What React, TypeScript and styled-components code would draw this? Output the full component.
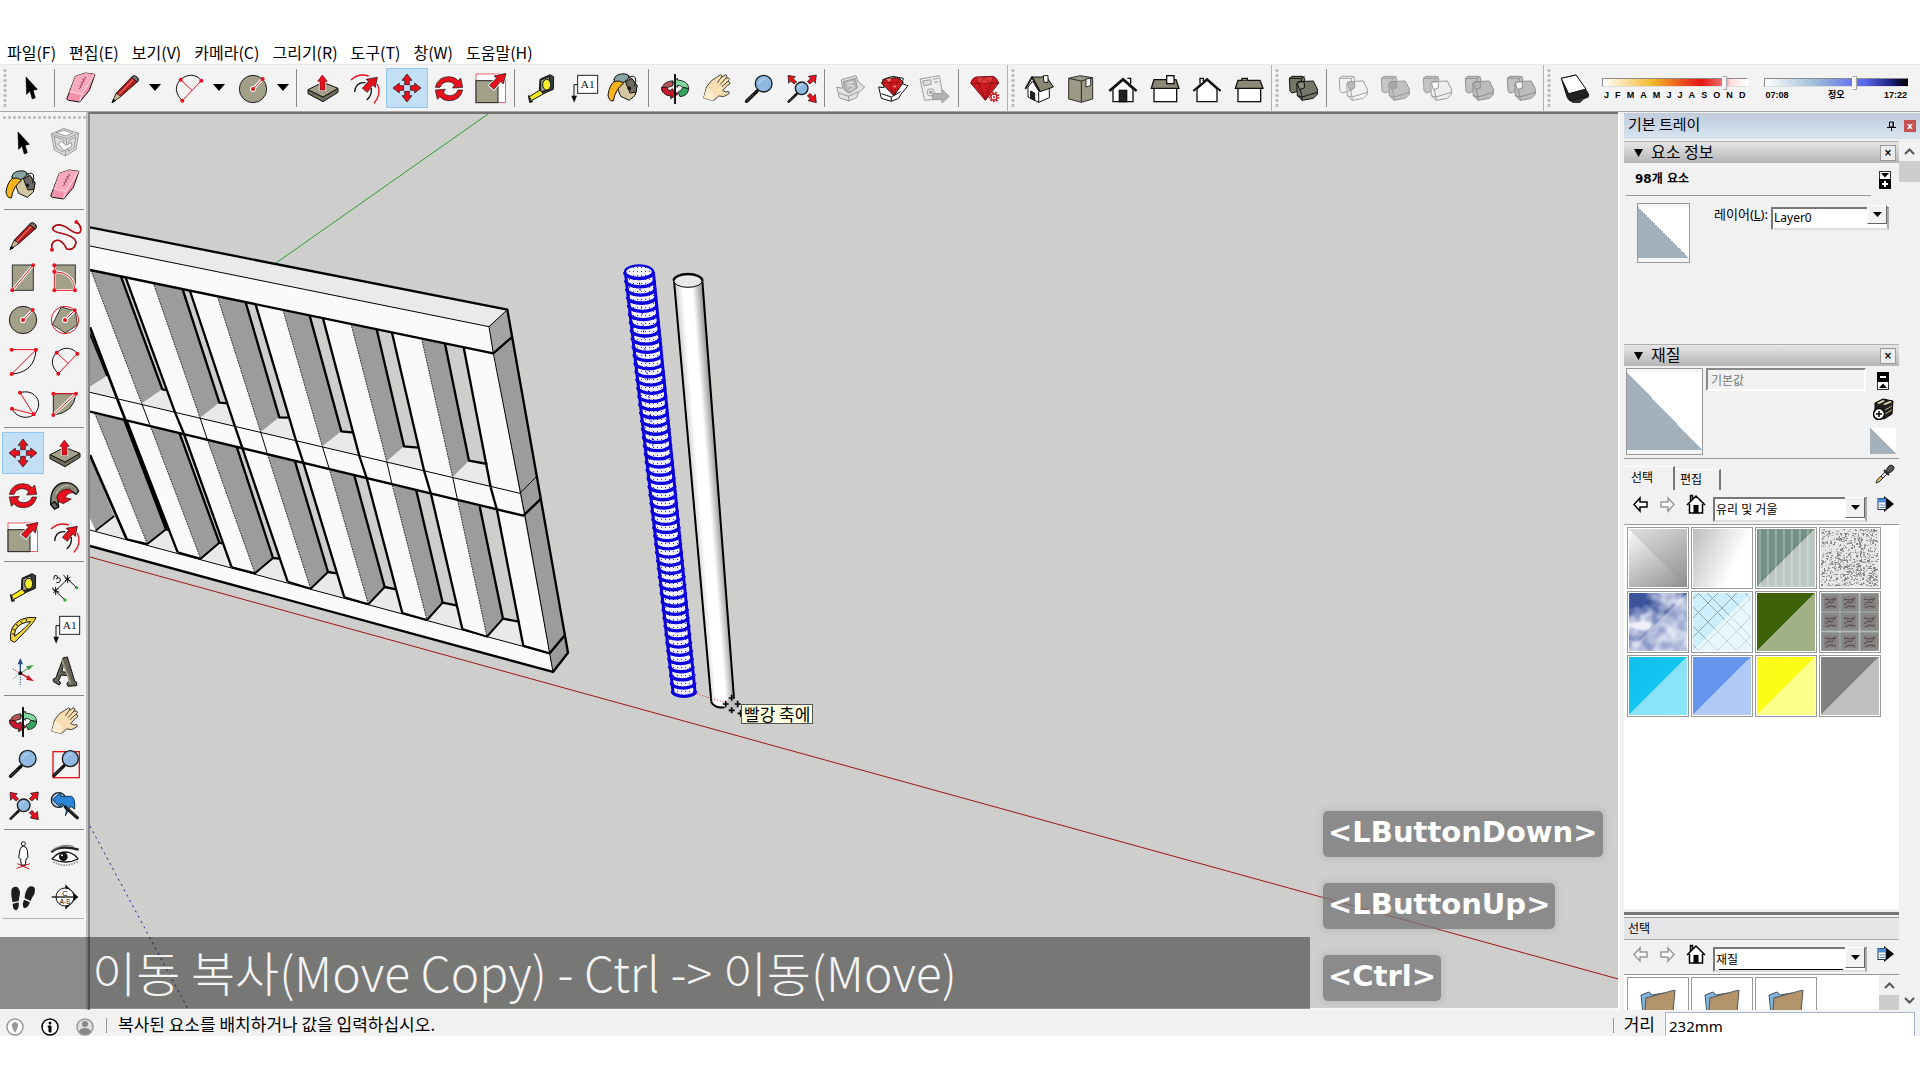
import React from 'react';
import styled, { createGlobalStyle, css } from 'styled-components';

const ui = '"Noto Sans", "Noto Sans CJK KR", sans-serif';
const kr = '"Noto Sans CJK KR", sans-serif';

const Global = createGlobalStyle`
  * { box-sizing: border-box; }
  body { margin: 0; background: #fff; font-family: ${kr}; color: #000; }
  button, input, select { font: inherit; color: inherit; margin: 0; }
`;

/* ---------- drawing helpers ---------- */
const RED = '#e8101c';
const STONE = '#a3a08a';
const INK = '#111';

const Dots = ({ at }: { at: number[][] }) => (
  <g fill={RED}>{at.map(([x, y]) => <circle key={`${x}-${y}`} cx={x} cy={y} r="6" />)}</g>
);

const RedArrow = ({ d }: { d: string }) => <path d={d} fill={RED} stroke={INK} strokeWidth="2" strokeLinejoin="round" />;

const Lens = ({ cx, cy, r }: { cx: number; cy: number; r: number }) => (
  <>
    <line x1={cx - r * 0.8} y1={cy + r * 0.9} x2={cx - r * 2.05} y2={cy + r * 2.1} stroke="#111" strokeWidth={r * 0.42} strokeLinecap="round" />
    <line x1={cx - r * 1.2} y1={cy + r * 1.25} x2={cx - r * 2} y2={cy + r * 2.05} stroke="#555" strokeWidth={r * 0.12} />
    <circle cx={cx} cy={cy} r={r} fill="#8fb9e0" stroke="#1c1c1c" strokeWidth="4" />
    <path d={`M${cx - r * 0.6} ${cy} Q${cx - r * 0.4} ${cy - r * 0.6} ${cx + r * 0.2} ${cy - r * 0.6}`} stroke="#c4dcf2" strokeWidth="3" fill="none" />
  </>
);

const Blocks = ({ a, b, line, over }: { a: string; b: string; line: string; over: string }) => (
  <g stroke={line} strokeWidth="3" strokeLinejoin="round">
    <path d="M22 34 L30 28 L62 28 L68 34 L68 62 L58 70 L30 78 L24 72Z" fill={a} />
    <path d="M22 34 L58 34 L68 28 M58 34 L58 70" fill="none" />
    <path d="M44 50 L50 44 L94 42 L106 66 L106 82 L94 94 L60 100 L46 86Z" fill={b} />
    <path d="M46 86 L60 90 L106 76 M60 90 L60 100 M50 44 L60 90" fill="none" />
    <path d="M46 46 L66 44 L68 62 L52 68Z" fill={over} />
  </g>
);

type Art = { o: [number, number]; art: React.ReactNode };
const icons: Record<string, Art> = {
  select: { o: [6, 36], art: <path d="M54 66 L56 118 L66 108 L73 132 L82 128 L75 106 L88 103Z" fill="#000" stroke="#000" strokeWidth="2" /> },
  component: {
    o: [132, 36],
    art: (
      <g fill="none" stroke="#9b9b9b" strokeWidth="3" strokeLinejoin="round">
        <path d="M154 72 L190 55 L236 70 L228 118 L196 138 L163 120Z" fill="#dcdcdc" />
        <path d="M154 72 L200 86 L236 70 M200 86 L196 138 M162 79 L192 90 L189 126 L169 114Z M207 91 L228 80 L222 114 L204 124Z" />
        <path d="M168 68 L192 61 L218 70 L198 78Z" fill="#fff" />
        <path d="M174 102 L184 94 L198 106 L214 98 L216 108 L192 122Z" fill="#fff" />
      </g>
    ),
  },
  paint: {
    o: [6, 162],
    art: (
      <g stroke={INK} strokeWidth="3" strokeLinejoin="round">
        <path d="M36 198 L78 186 L105 218 L100 246 L82 262 L56 250Z" fill="#d3c6a2" />
        <path d="M70 206 L90 196 L105 218 L102 238 L84 240Z" fill="#6d6a64" />
        <path d="M36 206 Q34 188 56 183 Q82 180 80 194 Q66 218 36 206Z" fill="#8aa4a6" />
        <path d="M36 206 Q54 200 64 212 Q40 228 34 264 Q20 264 18 246 Q22 218 36 206Z" fill="#f9b31c" />
        <path d="M80 196 Q90 184 100 194 Q104 206 97 220" fill="none" />
        <circle cx="82" cy="226" r="4" fill="#111" />
      </g>
    ),
  },
  eraser: {
    o: [132, 162],
    art: (
      <g stroke={INK} strokeWidth="3" strokeLinejoin="round">
        <path d="M152 258 L178 190 L208 180 L237 184 L220 232 L191 267 L158 262Z" fill="#f690ab" />
        <path d="M178 190 L208 180 L237 184 L199 242 L162 234Z" fill="#f8a9bd" stroke="none" />
        <path d="M160 236 L198 244 L191 265 M198 244 L234 188" fill="none" stroke="#fde4ea" />
        <path d="M188 228 l8 -6 l-5 -4 l10 -4 l-6 -5 l10 -4 l-5 -5 l9 -3 l-3 -6" fill="none" stroke="#9c4a5f" strokeWidth="3" />
      </g>
    ),
  },
  pencil: {
    o: [6, 309],
    art: (
      <g stroke={INK} strokeWidth="2.500" strokeLinejoin="round">
        <path d="M42 388 L90 338 Q98 332 106 340 Q112 348 108 352 L56 398Z" fill="#b11b1e" />
        <path d="M50 392 L96 344" stroke="#e46a62" strokeWidth="4" />
        <path d="M30 416 L42 388 L50 392 L56 398Z" fill="#cdb795" />
        <path d="M30 416 L34 406 L41 410Z" fill="#111" />
        <path d="M88 340 Q98 330 107 341 Q112 348 106 354Z" fill="#77706c" />
      </g>
    ),
  },
  freehand: {
    o: [132, 309],
    art: (
      <>
        <path d="M230 333 Q248 348 240 364 Q230 372 204 352 Q176 334 160 348 Q152 360 180 366 Q228 376 228 396 Q222 420 200 414 Q184 380 164 390 Q152 396 156 416" fill="none" stroke="#8c0c14" strokeWidth="5" />
        <path d="M230 333 Q248 348 240 364 Q230 372 204 352 Q176 334 160 348 Q152 360 180 366 Q228 376 228 396 Q222 420 200 414 Q184 380 164 390 Q152 396 156 416" fill="none" stroke={RED} strokeWidth="2" />
        <Dots at={[[229, 333], [156, 416]]} />
      </>
    ),
  },
  rect: {
    o: [6, 435],
    art: (
      <>
        <rect x="37" y="462" width="63" height="76" fill={STONE} stroke="#333" strokeWidth="3" />
        <path d="M37 538 L99 463" stroke="#fff" strokeWidth="9" /><path d="M37 538 L99 463" stroke={RED} strokeWidth="3" />
        <Dots at={[[37, 538], [99, 463]]} />
      </>
    ),
  },
  rotrect: {
    o: [132, 435],
    art: (
      <>
        <rect x="163" y="462" width="63" height="76" fill={STONE} stroke="#333" strokeWidth="3" />
        <path d="M163 482 Q222 484 225 538 L163 538 L163 463" fill="none" stroke="#fff" strokeWidth="8" />
        <path d="M163 482 Q222 484 225 538 L163 538 L163 463" fill="none" stroke={RED} strokeWidth="3" />
        <Dots at={[[163, 463], [163, 482], [163, 538], [225, 538]]} />
      </>
    ),
  },
  circle: {
    o: [6, 561],
    art: (
      <>
        <circle cx="69" cy="627" r="41" fill={STONE} stroke="#222" strokeWidth="3" />
        <circle cx="69" cy="627" r="9" fill="#fff" />
        <path d="M69 627 L98 597" stroke="#fff" strokeWidth="9" /><path d="M69 627 L98 597" stroke={RED} strokeWidth="3" />
        <Dots at={[[69, 627], [98, 597]]} />
      </>
    ),
  },
  polygon: {
    o: [132, 561],
    art: (
      <>
        <circle cx="195" cy="627" r="41" fill="#fff" stroke={RED} strokeWidth="3" />
        <path d="M184 588 L226 600 L232 642 L196 666 L157 640Z" fill={STONE} stroke="#333" strokeWidth="3" />
        <path d="M195 627 L224 598" stroke="#fff" strokeWidth="9" /><path d="M195 627 L224 598" stroke={RED} strokeWidth="3" />
        <circle cx="195" cy="627" r="9" fill="#fff" />
        <Dots at={[[195, 627], [224, 598]]} />
      </>
    ),
  },
  arc: {
    o: [6, 687],
    art: (
      <>
        <path d="M108 716 Q104 784 35 789" fill="none" stroke="#111" strokeWidth="3" />
        <path d="M35 716 L108 716 L35 789" fill="none" stroke={RED} strokeWidth="3" />
        <Dots at={[[35, 716], [108, 716], [35, 789]]} />
      </>
    ),
  },
  arc2: {
    o: [132, 687],
    art: (
      <>
        <path d="M175 788 C152 766 152 742 170 725 C190 706 218 708 232 728" fill="none" stroke="#111" strokeWidth="3" />
        <path d="M232 728 L175 788 M170 725 L204 757" fill="none" stroke={RED} strokeWidth="3" />
        <Dots at={[[170, 725], [232, 728], [175, 788]]} />
      </>
    ),
  },
  arc3: {
    o: [6, 813],
    art: (
      <>
        <path d="M60 845 C96 834 118 860 116 882 C112 926 56 932 36 893" fill="none" stroke="#111" strokeWidth="3" />
        <path d="M60 845 L101 910 L36 893" fill="none" stroke={RED} strokeWidth="3" />
        <Dots at={[[60, 845], [101, 910], [36, 893]]} />
      </>
    ),
  },
  pie: {
    o: [132, 813],
    art: (
      <>
        <path d="M160 848 L228 848 Q222 906 160 912Z" fill={STONE} stroke="#222" strokeWidth="3" />
        <path d="M160 912 L228 848" stroke="#fff" strokeWidth="9" />
        <path d="M160 848 L228 848 L160 912" fill="none" stroke={RED} strokeWidth="3" />
        <Dots at={[[160, 848], [228, 848], [160, 912]]} />
      </>
    ),
  },
  move: {
    o: [8, 968],
    art: (
      <>
        {[0, 90, 180, 270].map((a) => (
          <g key={a} transform={`rotate(${a} 71 1031)`}>
            <RedArrow d="M71 989 L86 1008 L78 1008 L78 1021 L64 1021 L64 1008 L56 1008Z" />
          </g>
        ))}
      </>
    ),
  },
  pushpull: {
    o: [132, 966],
    art: (
      <g stroke="#111" strokeWidth="3" strokeLinejoin="round">
        <path d="M150 1034 L150 1046 L195 1070 L240 1042 L240 1030 L195 1056Z" fill="#6f6e5c" />
        <path d="M150 1034 L195 1012 L240 1030 L195 1056Z" fill="#a3a18c" />
        <path d="M193 988 L210 1010 L202 1010 L202 1035 L185 1035 L185 1010 L177 1010Z" fill={RED} stroke="#fff" strokeWidth="5" />
        <path d="M193 990 L208 1009 L201 1009 L201 1035 L186 1035 L186 1009 L179 1009Z" fill={RED} stroke="#7c0910" strokeWidth="2" />
      </g>
    ),
  },
  rotate: {
    o: [6, 1089],
    art: (
      <>
        <RedArrow d="M28 1150 Q36 1118 68 1118 Q88 1118 96 1130 L104 1122 L110 1150 L80 1152 L86 1142 Q78 1132 66 1133 Q48 1134 42 1150Z" />
        <g transform="rotate(180 69 1154)">
          <RedArrow d="M28 1150 Q36 1118 68 1118 Q88 1118 96 1130 L104 1122 L110 1150 L80 1152 L86 1142 Q78 1132 66 1133 Q48 1134 42 1150Z" />
        </g>
      </>
    ),
  },
  follow: {
    o: [132, 1089],
    art: (
      <g stroke="#111" strokeWidth="4" strokeLinejoin="round">
        <path d="M152 1180 Q150 1128 186 1116 Q222 1110 236 1140 L228 1150 Q206 1132 184 1150 Q170 1166 176 1188 L164 1194Z" fill="#8b8a7a" />
        <path d="M168 1150 Q178 1124 206 1122" fill="none" stroke="#c2c0ad" strokeWidth="3" />
        <path d="M170 1160 Q176 1134 208 1134 L222 1144 Q200 1146 196 1160 L214 1164 L190 1178 L176 1172Z" fill={RED} strokeWidth="2" />
        <path d="M152 1180 L164 1172 L176 1188 L164 1194Z" fill="#6a6a5c" />
      </g>
    ),
  },
  scale: {
    o: [10, 47],
    art: (
      <>
        <rect x="28" y="68" width="88" height="86" fill="#fff" stroke={RED} strokeWidth="2" />
        <rect x="28" y="88" width="66" height="66" fill={STONE} stroke="#222" strokeWidth="3" />
        <path d="M118 66 L110 98 L102 90 L82 114 L68 102 L90 80 L82 74Z" fill={RED} stroke="#fff" strokeWidth="7" />
        <RedArrow d="M118 66 L110 98 L102 90 L82 114 L68 102 L90 80 L82 74Z" />
      </>
    ),
  },
  offset: {
    o: [132, 45],
    art: (
      <>
        <path d="M153 84 Q176 62 206 72 M232 96 Q246 126 222 154" fill="none" stroke={RED} strokeWidth="4" />
        <path d="M164 120 Q166 90 196 92 M214 108 Q216 132 200 144" fill="none" stroke="#111" strokeWidth="4" />
        <RedArrow d="M232 76 L226 106 L218 99 L202 121 L187 109 L206 88 L198 82Z" />
      </>
    ),
  },
  tape: {
    o: [6, 195],
    art: (
      <g stroke="#111" strokeWidth="3" strokeLinejoin="round">
        <path d="M66 232 L96 218 L107 224 L106 262 L74 276 L64 268Z" fill="#3b3b38" />
        <path d="M68 234 L94 224 L94 262 L68 270Z" fill="#a09e92" />
        <ellipse cx="86" cy="248" rx="12" ry="16" fill="#f7ee2d" />
        <path d="M66 264 L76 276 L40 296 L34 284Z" fill="#f6e91f" />
        <path d="M32 280 L36 300 L44 298" fill="none" strokeWidth="5" />
      </g>
    ),
  },
  dim: {
    o: [132, 195],
    art: (
      <>
        <path d="M166 270 L203 234 M156 260 L194 296 M190 222 L230 260" stroke="#111" strokeWidth="3" />
        <path d="M160 276 L174 262 M158 266 L178 274 M167 258 L167 282 M195 240 L211 228 M194 230 L212 240 M203 222 L203 246" stroke="#111" strokeWidth="3" />
        <path d="M164 230 q10 -12 14 -2 q-2 8 -8 6 q14 0 8 10 q-8 6 -14 -2" transform="rotate(-40 170 236)" fill="none" stroke="#111" strokeWidth="3" />
        <circle cx="230" cy="260" r="5" fill="#3aa644" /><circle cx="195" cy="297" r="5" fill="#3aa644" />
      </>
    ),
  },
  protractor: {
    o: [6, 321],
    art: (
      <g stroke="#111" strokeWidth="3" strokeLinejoin="round">
        <path d="M32 418 Q26 376 62 356 Q84 346 108 350 L104 358 Q96 372 44 424Z" fill="#f0d43a" />
        <path d="M44 406 Q42 380 66 368 Q80 362 92 362 Q80 378 44 406Z" fill="#f4f4f4" />
        <path d="M36 398 l8 2 M38 384 l8 4 M48 370 l6 5 M62 360 l4 6 M78 354 l2 7" />
      </g>
    ),
  },
  text: {
    o: [132, 321],
    art: (
      <>
        <rect x="179" y="346" width="60" height="54" fill="#fff" stroke="#222" strokeWidth="3" />
        <text x="209" y="383" fontFamily='"Liberation Serif", serif' fontSize="34" textAnchor="middle" fill="#111">A1</text>
        <path d="M179 374 L168 374 L168 412" fill="none" stroke="#111" strokeWidth="3" />
        <path d="M160 407 L177 407 L168.500 428Z" fill="#111" />
      </>
    ),
  },
  axes: {
    o: [6, 447],
    art: (
      <>
        <path d="M61 517 L61 486" stroke="#244a86" strokeWidth="4" /><path d="M53 490 L61 471 L69 490Z" fill="#244a86" />
        <path d="M61 517 L84 502" stroke="#3f9a45" strokeWidth="3" /><path d="M78 496 L101 492 L86 508Z" fill="#3f9a45" />
        <path d="M61 517 L84 530" stroke="#c11a22" strokeWidth="4" /><path d="M84 522 L102 541 L78 536Z" fill="#c11a22" />
        <path d="M61 526 L61 552" stroke="#244a86" strokeWidth="3" strokeDasharray="4 4" />
        <path d="M56 514 L36 502" stroke="#c11a22" strokeWidth="3" strokeDasharray="4 4" />
        <path d="M56 521 L38 534" stroke="#3f9a45" strokeWidth="3" strokeDasharray="4 4" />
        <circle cx="61" cy="517" r="6" fill="#111" />
      </>
    ),
  },
  text3d: {
    o: [132, 447],
    art: (
      <g stroke="#111" strokeWidth="3" strokeLinejoin="round">
        <path d="M190 470 L202 468 L224 540 L230 544 L230 554 L204 556 L200 548 L208 540 L204 524 L184 522 L176 538 L182 546 L178 552 L160 542 L160 534 L168 530Z" fill="#66645a" />
        <path d="M190 490 L200 514 L186 512Z" fill="#f2f2f2" />
        <path d="M186 476 L212 548" stroke="#a3a08a" strokeWidth="5" />
      </g>
    ),
  },
  orbit: {
    o: [6, 597],
    art: (
      <g stroke="#111" strokeWidth="2.500" strokeLinejoin="round">
        <path d="M30 668 Q28 642 62 638 L62 654 Q46 656 46 662 L48 670Z" fill="#b95552" />
        <path d="M76 630 L76 636 Q110 638 110 662 L92 658 Q88 652 76 652 L76 658 L62 646Z" fill="#7fd6a0" />
        <path d="M110 662 Q108 684 84 686 L78 672 Q92 668 92 658Z" fill="#38a361" />
        <path d="M28 658 Q30 682 56 684 L56 692 L78 678 L60 662 L58 668 Q46 668 44 658Z" fill="#c4162c" />
        <path d="M69 620 L69 706" stroke="#111" strokeWidth="6" strokeLinecap="round" />
      </g>
    ),
  },
  hand: {
    o: [132, 597],
    art: (
      <g stroke="#222" strokeWidth="2.500" strokeLinejoin="round">
        <path d="M155 690 L164 656 Q178 634 194 628 L206 620 Q212 622 208 628 L222 620 Q228 624 222 630 L230 630 Q236 634 228 640 L234 644 Q234 650 226 652 L212 668 L222 672 Q236 668 230 678 Q216 690 200 684 L184 698Z" fill="#f8dfb3" />
        <path d="M208 628 L196 644 M222 630 L204 650 M228 640 L210 656" fill="none" />
        <path d="M155 690 L164 660 L184 672 L184 698Z" fill="#fbeccf" stroke="none" />
      </g>
    ),
  },
  zoom: { o: [6, 723], art: <Lens cx={83} cy={773} r={25} /> },
  zoomwin: {
    o: [132, 723],
    art: (
      <>
        <rect x="159" y="752" width="79" height="78" fill="none" stroke={RED} strokeWidth="4" />
        <Lens cx={211} cy={773} r={24} />
      </>
    ),
  },
  extents: {
    o: [6, 849],
    art: (
      <>
        <RedArrow d="M30 874 L52 878 L46 884 L56 894 L48 900 L38 891 L32 898Z" />
        <RedArrow d="M115 873 L112 898 L106 890 L96 900 L88 893 L98 883 L91 877Z" />
        <RedArrow d="M115 956 L90 950 L97 944 L88 936 L96 928 L105 938 L112 931Z" />
        <Lens cx={71} cy={913} r={19} />
      </>
    ),
  },
  previous: {
    o: [132, 849],
    art: (
      <>
        <circle cx="176" cy="897" r="22" fill="#a9c9e6" stroke="#222" strokeWidth="4" />
        <path d="M158 896 L182 875 L182 886 L214 886 Q226 890 224 924 L212 916 L196 944 Q206 916 182 908 L182 920Z" fill="#2b86da" stroke="#12314f" strokeWidth="3" strokeLinejoin="round" />
        <path d="M196 918 L232 950" stroke="#1b1b1b" strokeWidth="10" strokeLinecap="round" />
        <path d="M200 918 L232 946" stroke="#666" strokeWidth="2" />
      </>
    ),
  },
  position: {
    o: [6, 999],
    art: (
      <>
        <path d="M50 1102 L90 1088 M52 1088 L88 1104" stroke={RED} strokeWidth="3" />
        <path d="M60 1046 Q62 1036 70 1036 Q80 1036 82 1048 L84 1070 L78 1074 L76 1092 L64 1092 L62 1074 L56 1070Z" fill="#fff" stroke="#111" strokeWidth="3" />
        <circle cx="70" cy="1028" r="6" fill="#fff" stroke="#111" strokeWidth="3" />
      </>
    ),
  },
  look: {
    o: [132, 999],
    art: (
      <>
        <path d="M154 1054 Q176 1030 236 1046" fill="none" stroke="#222" strokeWidth="7" />
        <path d="M156 1074 Q178 1048 206 1054 Q226 1060 234 1074 Q200 1092 156 1074Z" fill="#fff" stroke="#111" strokeWidth="4" />
        <path d="M154 1050 Q186 1026 220 1036" fill="none" stroke="#888" strokeWidth="4" />
        <circle cx="190" cy="1067" r="13" fill="#111" /><circle cx="186" cy="1063" r="3" fill="#fff" />
        <path d="M160 1082 Q196 1104 236 1080" fill="none" stroke="#999" strokeWidth="5" strokeDasharray="5 3" />
      </>
    ),
  },
  walk: {
    o: [6, 1125],
    art: (
      <g fill="#1d1d1d">
        <path d="M34 1168 Q38 1154 52 1158 Q64 1170 58 1188 L56 1200 L38 1204 Q32 1184 34 1168Z" />
        <path d="M38 1208 L56 1204 Q58 1220 50 1228 Q38 1228 38 1208Z" />
        <path d="M84 1160 Q94 1152 104 1160 Q108 1176 96 1190 L92 1200 L74 1192 Q74 1174 84 1160Z" />
        <path d="M72 1196 L90 1204 Q84 1220 74 1222 Q64 1216 72 1196Z" />
      </g>
    ),
  },
  section: {
    o: [132, 1125],
    art: (
      <>
        <path d="M196 1150 L234 1188 L196 1226Z" fill="#111" />
        <circle cx="195" cy="1188" r="27" fill="#fff" stroke="#111" strokeWidth="3" />
        <path d="M155 1188 L234 1188" stroke="#111" strokeWidth="4" />
        <text x="195" y="1184" fontFamily='"Liberation Sans", sans-serif' fontSize="22" textAnchor="middle">C</text>
        <text x="195" y="1208" fontFamily='"Liberation Sans", sans-serif' fontSize="19" textAnchor="middle">A-S</text>
      </>
    ),
  },
  warehouseGet: {
    o: [0, 0],
    art: (
      <g stroke="#989898" strokeWidth="3" strokeLinejoin="round">
        <path d="M20 60 L38 64 L34 38 L78 26 L84 44 L104 60 L84 78 L80 92 L56 102 L28 92Z" fill="#e2e2e2" />
        <path d="M40 44 L76 34 L82 62 L58 78 L44 70Z" fill="#b4b4b4" />
        <path d="M50 50 L70 45 M52 58 Q64 50 72 58 Q70 68 58 70" fill="none" stroke="#f2f2f2" />
        <path d="M26 78 L56 88 L84 74 M56 88 L56 102" fill="none" />
      </g>
    ),
  },
  warehouseRuby: {
    o: [0, 0],
    art: (
      <g stroke="#111" strokeWidth="3" strokeLinejoin="round">
        <path d="M20 60 L36 62 L32 38 L62 28 L94 34 L90 50 L108 56 L88 80 L80 94 L58 103 L28 94Z" fill="#fff" />
        <path d="M28 80 L58 90 L86 74 M58 90 L58 103" fill="none" />
        <path d="M28 48 L42 34 L80 32 L94 46 L66 86Z" fill="#d31a1f" />
        <path d="M28 48 L94 46 M42 34 L52 48 L66 84 L76 47 L80 32" fill="none" stroke="#6e0a0d" strokeWidth="2" />
        <path d="M42 36 L58 34 L52 46Z M62 58 L74 54 L70 62Z" fill="#ff8a80" stroke="none" />
      </g>
    ),
  },
  warehouseSend: {
    o: [0, 0],
    art: (
      <g stroke="#9c9c9c" strokeWidth="3" strokeLinejoin="round">
        <path d="M18 36 L76 26 L88 94 L32 100Z" fill="#eee" />
        <path d="M26 42 L50 38 L52 52 L30 56Z M57 37 L72 34 M60 46 L74 44" fill="#ddd" />
        <circle cx="50" cy="76" r="11" fill="none" /><circle cx="50" cy="76" r="4" fill="#aaa" />
        <path d="M56 80 L84 80 L84 68 L106 88 L84 108 L84 98 L56 98Z" fill="#b2b2b2" />
      </g>
    ),
  },
  ruby: {
    o: [0, 0],
    art: (
      <g strokeLinejoin="round">
        <path d="M20 48 Q24 34 36 30 L88 28 Q100 34 104 48 L64 100Z" fill="#c91a1f" stroke="#7d0b10" strokeWidth="3" />
        <path d="M36 32 L88 30 L80 50 L44 50Z" fill="#e0393b" />
        <path d="M22 50 L102 48 M44 50 L64 98 L80 50 L88 30 M44 50 L36 32 M44 50 L62 32 L80 50" stroke="#7d0b10" strokeWidth="2" fill="none" />
        <circle cx="90" cy="90" r="13" fill="#f3f3f3" stroke="#c91a1f" strokeWidth="6" strokeDasharray="5 4" />
        <circle cx="90" cy="90" r="9" fill="#fff" stroke="#c91a1f" strokeWidth="4" />
        <circle cx="90" cy="90" r="3" fill="#c91a1f" />
      </g>
    ),
  },
  houseIso: {
    o: [0, 0],
    art: (
      <g stroke="#111" strokeWidth="3" strokeLinejoin="round">
        <path d="M30 60 L44 42 L62 72 L94 62 L94 92 L62 106 L30 90Z" fill="#fff" />
        <path d="M42 30 L86 30 L106 60 L66 74Z" fill="#8b8975" />
        <path d="M22 66 L42 30 L66 74" fill="none" strokeWidth="5" />
        <path d="M38 72 L50 78 L50 100 L38 94Z" fill="#222" />
        <path d="M76 26 L90 26 L90 46 L78 46Z" fill="#fff" />
        <path d="M62 74 L62 106" />
      </g>
    ),
  },
  boxIso: {
    o: [0, 0],
    art: (
      <g stroke="#111" strokeWidth="2.500" strokeLinejoin="round">
        <path d="M26 34 L60 26 L98 32 L98 96 L64 106 L26 96Z" fill="#9c9a86" />
        <path d="M26 34 L64 42 L98 32 M64 42 L64 106" fill="none" />
        <path d="M78 36 L92 34 L92 56 L78 60Z" fill="#fff" />
      </g>
    ),
  },
  houseFront: {
    o: [0, 0],
    art: (
      <g stroke="#111" strokeWidth="4">
        <path d="M33 66 L63 40 L93 66 L93 104 L33 104Z" fill="#fff" />
        <path d="M22 72 L63 36 L104 72" fill="none" strokeWidth="7" />
        <path d="M76 34 L86 34 L86 50" fill="#fff" />
        <rect x="52" y="70" width="22" height="34" fill="#222" />
      </g>
    ),
  },
  houseRight: {
    o: [0, 0],
    art: (
      <g stroke="#111" strokeWidth="4">
        <rect x="30" y="64" width="68" height="40" fill="#fff" />
        <path d="M30 38 L96 38 L105 64 L22 64Z" fill="#8b8975" />
        <rect x="68" y="26" width="22" height="24" fill="#fff" />
      </g>
    ),
  },
  houseBack: {
    o: [0, 0],
    art: (
      <g stroke="#111" strokeWidth="4">
        <path d="M33 66 L63 40 L93 66 L93 104 L33 104Z" fill="#fff" />
        <path d="M22 72 L63 36 L104 72" fill="none" strokeWidth="6" />
        <path d="M42 50 L42 34 L52 34 L52 44" fill="#fff" />
      </g>
    ),
  },
  houseLeft: {
    o: [0, 0],
    art: (
      <g stroke="#111" strokeWidth="4">
        <rect x="30" y="64" width="68" height="40" fill="#fff" />
        <path d="M30 40 L96 40 L105 64 L22 64Z" fill="#8b8975" />
        <path d="M42 40 L42 34 L58 34 L58 40" fill="#8b8975" />
      </g>
    ),
  },
  shell: { o: [0, 0], art: <Blocks a="#77766a" b="#77766a" line="#111" over="#8e8d7e" /> },
  intersect: { o: [0, 0], art: <Blocks a="none" b="none" line="#a2a2a2" over="#bbb" /> },
  union: { o: [0, 0], art: <Blocks a="#c6c6c6" b="#c0c0c0" line="#9a9a9a" over="#a8a8a8" /> },
  subtract: { o: [0, 0], art: <Blocks a="#c2c2c2" b="#eeeeee" line="#9c9c9c" over="#fff" /> },
  trim: { o: [0, 0], art: <Blocks a="#c2c2c2" b="#bcbcbc" line="#8e8e8e" over="#b4b4b4" /> },
  split: { o: [0, 0], art: <Blocks a="#c2c2c2" b="#bcbcbc" line="#8e8e8e" over="#f2f2f2" /> },
  shadow: {
    o: [0, 0],
    art: (
      <g stroke="#111" strokeWidth="3" strokeLinejoin="round">
        <path d="M40 92 L94 74 L106 90 L88 98 L78 108 L56 108Z" fill="#333" stroke="none" />
        <path d="M22 34 L66 24 L102 78 L104 86 L48 102 L40 92Z" fill="#222" />
        <path d="M22 34 L66 24 L96 66 L44 80Z" fill="#fff" />
      </g>
    ),
  },
};

const IconSvg = styled.svg`display: block; width: 42px; height: 42px; overflow: visible; flex: none;`;
const Icon = ({ name }: { name: string }) => (
  <IconSvg viewBox={`${icons[name].o[0]} ${icons[name].o[1]} 126 126`} aria-hidden="true">{icons[name].art}</IconSvg>
);

/* ---------- shell ---------- */
const Page = styled.div`
  display: flex; flex-direction: column; height: 100vh; min-height: 700px;
  padding: 41px 0 44px; background: #fff; overflow: hidden;
`;
const MenuBar = styled.nav`display: flex; height: 23px; align-items: center;`;
const MenuItem = styled.button`
  border: 0; background: none; padding: 0 6px 0 7px; font-size: 16px; line-height: 23px; white-space: nowrap;
`;
const TopBar = styled.div`
  display: flex; height: 48px; flex: none; background: #f3f3f3;
  border-top: 1px solid #e6e6e6; border-bottom: 1px solid #a5a5a5;
`;
const Group = styled.div<{ $grow?: boolean }>`
  display: flex; align-items: center; padding-right: 1px; border-right: 1px solid #b2b2b2;
  ${(p) => p.$grow && css`flex: 1; border-right: 0;`}
`;
const Grip = styled.div`
  width: 10px; height: 40px; flex: none;
  background: radial-gradient(circle, #b5b5b5 1px, transparent 2px) 3px 0 / 4px 5px repeat-y;
`;
const Sep = styled.div`
  width: 8px; height: 38px; flex: none;
  background: linear-gradient(#8a8a8a, #8a8a8a) 2px 0 / 1px 100% no-repeat;
`;
const ToolButton = styled.button<{ $on?: boolean; $side?: boolean }>`
  display: flex; align-items: center; justify-content: center; flex: none; padding: 0;
  width: 42px; height: ${(p) => (p.$side ? 42 : 40)}px; border: 1px solid transparent; background: none;
  ${(p) => p.$on && css`background: #c3dff6; border-color: #94c6ee;`}
`;
const SplitTool = styled.div`display: flex; align-items: center; margin: 0 2px;`;
const DropButton = styled.button`
  display: flex; align-items: center; justify-content: center; width: 18px; height: 40px;
  padding: 0; border: 0; background: none;
`;
const Tri = () => <svg width="12" height="8" aria-hidden="true"><path d="M0 0H12L6 7Z" fill="#000" /></svg>;

const Sliders = styled.div`display: flex; gap: 16px; padding: 2px 10px 2px 6px; flex: 1;`;
const SliderBox = styled.label`display: flex; flex-direction: column; flex: 1; max-width: 146px;`;
const Range = styled.input<{ $track: string }>`
  appearance: none; width: 100%; height: 14px; margin: 0; background: none;
  &::-webkit-slider-runnable-track {
    height: 9px; border: 1px solid #8b8b8b; border-right-color: #fff; border-bottom-color: #ddd; background: ${(p) => p.$track};
  }
  &::-webkit-slider-thumb {
    appearance: none; width: 5px; height: 14px; margin-top: -3px; background: #f4f4f4;
    border: 1px solid #aaa; border-left-color: #fff;
  }
`;
const Ticks = styled.span`
  display: flex; justify-content: space-between; padding: 0 2px;
  font: bold 9px/12px "Liberation Sans", "Noto Sans CJK KR", sans-serif;
`;

const Workspace = styled.main`position: relative; display: flex; flex: 1; min-height: 0;`;
const SideBar = styled.aside`
  width: 90px; flex: none; background: #f3f3f3; border-right: 2px solid #858585; padding: 3px 2px 0;
  box-shadow: inset -2px 0 #c2c2c2;
`;
const SideGrip = styled.div`height: 7px; background: radial-gradient(circle, #bcbcbc 1px, transparent 2px) 0 0 / 5px 5px repeat-x;`;
const SideTools = styled.div`display: flex; flex-wrap: wrap; width: 84px;`;
const SideLine = styled.div`
  width: 84px; height: 8px; background: linear-gradient(#8a8a8a, #8a8a8a) 2px 3px / 80px 1px no-repeat;
`;
const SideEnd = styled.div`border-top: 1px solid #b5b5b5; margin-right: 2px;`;
const Viewport = styled.section`
  position: relative; flex: 1; min-width: 0; overflow: hidden; background: #cececd;
  border-top: 2px solid #727272; border-bottom: 2px solid #f8f8f8;
`;
const Canvas = styled.svg`display: block; width: 100%; height: 100%;`;
const Tip = styled.div`
  position: absolute; left: 651px; top: 590px; height: 20px; padding: 0 2px; background: #ffffe1;
  border: 1px solid #555; font-size: 17px; line-height: 18px; white-space: nowrap;
`;
const Keys = styled.div`
  position: absolute; right: 15px; bottom: 7px; width: 280px;
  display: flex; flex-direction: column; align-items: flex-start; gap: 26px;
`;
const Key = styled.kbd`
  height: 46px; padding: 0 5px; border-radius: 5px; background: rgba(120, 120, 120, 0.78); color: #fff;
  box-shadow: 0 0 4px 3px rgba(150, 150, 150, 0.25);
  font: bold 29px/42px "DejaVu Sans", sans-serif; white-space: nowrap;
`;
const Caption = styled.div`
  position: absolute; left: 0; bottom: 1px; width: 1310px; max-width: 69%; height: 72px; padding-left: 92px;
  background: rgba(21, 21, 21, 0.47); color: #f4f4f4; white-space: nowrap;
  font: 300 48px/68px ${kr};
`;

/* ---------- tray ---------- */
const Tray = styled.aside`
  display: flex; flex-direction: column; width: 302px; flex: none; padding-left: 6px;
  background: #f1f1f1; box-shadow: inset 2px 0 #fafafa;
`;
const TrayTitle = styled.header`
  display: flex; align-items: center; height: 26px; margin-top: 1px; padding: 0 4px 0 4px; flex: none;
  background: linear-gradient(#c0ccdb, #d7e4f2); font-size: 15px; line-height: 22px;
`;
const TrayName = styled.span`flex: 1; padding-bottom: 4px;`;
const PinButton = styled.button`display: flex; border: 0; background: none; padding: 0; margin-right: 8px;`;
const CloseButton = styled.button`
  width: 12px; height: 12px; padding: 0; border: 0; background: #c75050; color: #fff;
  font: bold 9px/10px "DejaVu Sans", sans-serif;
`;
const TrayBody = styled.div`display: flex; flex: 1; min-height: 0; padding-top: 2px;`;
const TrayMain = styled.div`display: flex; flex-direction: column; flex: 1; min-width: 0;`;
const ScrollBar = styled.div<{ $w: number }>`
  display: flex; flex-direction: column; align-items: center; width: ${(p) => p.$w}px; flex: none; background: #f1f1f1;
`;
const ScrollButton = styled.button`
  display: flex; align-items: center; justify-content: center; width: 100%; height: 20px; flex: none;
  padding: 0; border: 0; background: none;
`;
const Thumb = styled.div`width: 100%; height: 21px; background: #cdcdcd; margin-bottom: auto;`;
const Chevron = ({ down }: { down?: boolean }) => (
  <svg width="11" height="7" aria-hidden="true"><path d={down ? 'M1 1L5.500 5.500L10 1' : 'M1 6L5.500 1.500L10 6'} fill="none" stroke="#555" strokeWidth="2" /></svg>
);
const SectionHead = styled.h2`
  display: flex; align-items: center; gap: 8px; height: 22px; margin: 0; padding: 0 3px 0 10px; flex: none;
  background: linear-gradient(#e6e6e6, #b5b5b5); border-top: 1px solid #b0b0b0; font-size: 16px; font-weight: 400; line-height: 20px;
`;
const HeadText = styled.span`flex: 1; padding-bottom: 4px;`;
const BoxClose = styled.button`
  width: 16px; height: 16px; padding: 0; background: #eee; border: 1px solid #999; font: bold 10px/12px "DejaVu Sans", sans-serif;
`;
const InfoPanel = styled.div`flex: none; height: 181px; padding: 0 8px 0 2px;`;
const InfoTop = styled.div`display: flex; height: 33px; align-items: center; justify-content: space-between;`;
const Count = styled.strong`
  flex: 1; align-self: stretch; margin-right: 8px; padding-left: 9px; border-bottom: 1px solid #999;
  font: bold 12px/32px "DejaVu Sans", "Noto Sans CJK KR", sans-serif;
`;
const InfoRow = styled.div`display: flex; align-items: flex-start; padding: 7px 2px 0 11px;`;
const Swatch = styled.div<{ $w: number; $h: number }>`
  width: ${(p) => p.$w}px; height: ${(p) => p.$h}px; flex: none; border: 1px solid #999; padding: 3px 0 4px; background: #f4f4f4;
`;
const Diagonal = styled.div`
  height: 100%; background: linear-gradient(to top right, #a4b1ba 50%, #fff 50%);
`;
const LayerLabel = styled.label`margin-left: auto; padding-right: 3px; font: 13px/23px ${ui}; white-space: nowrap;`;
const Under = styled.span`text-decoration: underline;`;
const Combo = styled.div<{ $w?: number }>`
  position: relative; ${(p) => (p.$w ? css`width: ${p.$w}px; height: 23px; flex: none;` : css`height: 25px; flex: 1; margin-right: 3px;`)}
`;
const Select = styled.select<{ $lined?: boolean }>`
  appearance: none; width: 100%; height: 100%; padding: 0 22px 0 1px; border: 2px solid #777;
  border-right-color: #aaa; border-bottom-color: #ddd; border-radius: 0; font: 12px/18px ${ui};
  background: ${(p) => (p.$lined ? 'linear-gradient(#000, #000) 4px 20px / 124px 1px no-repeat, #fff' : '#fff')};
`;
const ComboArrow = styled.span`
  position: absolute; right: 2px; top: 2px; bottom: 2px; width: 20px; display: flex; align-items: center; justify-content: center;
  pointer-events: none; background: #f1f1f1; border: 1px solid #fff; border-right-color: #666; border-bottom-color: #666;
`;
const MatPanel = styled.div`display: flex; gap: 3px; flex: none; height: 93px; padding: 2px 2px 0 2px; border-bottom: 1px solid #999;`;
const MatName = styled.input`
  flex: 1; min-width: 0; height: 23px; padding: 0 3px; border: 2px solid #888; border-right-color: #fff;
  border-bottom-color: #fff; border-radius: 0; background: #f1f1f1; color: #777; font: 12px/18px ${kr};
`;
const MatSide = styled.div`display: flex; flex-direction: column; align-items: center; justify-content: space-between; width: 28px; padding: 4px 0 4px;`;
const IconButton = styled.button<{ $lift?: boolean }>`
  display: flex; align-items: center; justify-content: center; flex: none; padding: ${(p) => (p.$lift ? '0 0 6px' : '0')}; border: 0; background: none;
`;
const MiniDiag = styled.div`width: 26px; height: 26px; background: linear-gradient(to top right, #a4b1ba 50%, #fff 50%);`;
const Tabs = styled.div`display: flex; align-items: flex-end; height: 31px; padding-right: 4px; flex: none;`;
const Tab = styled.button<{ $on?: boolean }>`
  height: ${(p) => (p.$on ? 24 : 21)}px; width: ${(p) => (p.$on ? 51 : 46)}px; padding: 0 0 3px ${(p) => (p.$on ? 7 : 5)}px; text-align: left;
  border: 0; border-top: 1px solid #fff; border-right: 2px solid #777; background: none; font-size: 12px; line-height: 16px;
`;
const Push = styled.span`margin: 0 0 6px auto; display: flex;`;
const NavRow = styled.div`
  display: flex; align-items: center; height: 35px; flex: none; padding: 0 5px 0 8px; border-bottom: 1px solid #999;
  gap: 7px;
`;
const Arrows = styled.div`display: flex; gap: 10px; align-items: center; padding-bottom: 6px;`;
const List = styled.div`
  display: grid; grid-template-columns: repeat(4, 62px); grid-auto-rows: 62px; gap: 2px; align-content: start;
  flex: 1; min-height: 0; padding: 2px 0 0 3px; background: #fff; overflow: hidden;
`;
const Material = styled.button<{ $fill: string; $plain?: boolean }>`
  display: block; padding: 1px; border: 1px solid #999; background: ${(p) =>
    p.$plain ? '' : 'linear-gradient(to bottom right, transparent 50%, rgba(255, 255, 255, 0.5) 50%) content-box, '}${(p) => p.$fill};
`;
const Texture = styled.svg`display: block; width: 100%; height: 100%;`;
const Splitter = styled.div`height: 9px; flex: none; background: linear-gradient(#f1f1f1 3px, #777 3px, #777 6px, #f1f1f1 6px); border-bottom: 1px solid #999;`;
const SubTitle = styled.div`height: 22px; flex: none; padding-left: 4px; background: #e5e4e6; border-bottom: 1px solid #aaa; font-size: 12px; line-height: 19px;`;
const FolderArea = styled.div`display: flex; flex: none; height: 35px; background: #fff; overflow: hidden;`;
const Folders = styled.div`display: grid; grid-template-columns: repeat(3, 62px); gap: 2px; padding: 2px 0 0 3px; flex: 1;`;
const Folder = styled.button`display: flex; height: 62px; padding: 12px 0 0 12px; border: 1px solid #999; background: #fff;`;

/* ---------- status ---------- */
const Status = styled.footer`
  display: flex; align-items: flex-start; height: 26px; flex: none; padding-top: 2px; background: #f1f1f1; font-size: 17px; line-height: 24px;
`;
const StatusIcons = styled.div`display: flex; align-items: center; gap: 17px; padding: 6px 12px 0 6px;`;
const StatusLine = styled.div`width: 1px; height: 15px; margin-top: 6px; background: #999;`;
const StatusText = styled.span`flex: 1; padding-left: 11px;`;
const DistLabel = styled.label`padding: 0 10px;`;
const Dist = styled.input`
  width: 250px; height: 24px; margin: 0 5px 0 0; padding: 3px 3px 0; border: 1px solid #a9b6c8; border-bottom: 0; border-radius: 0; background: #fff;
  font: 15px/20px ${ui};
`;

/* ---------- model ---------- */
const P = (pts: number[][]) => pts.map((p) => p.join(',')).join(' ');
/* [topLeft, topRight, bottomLeft, bottomRight, ledge, edgeTop, edgeBottom] */
const upper = [
  [[18, 181], [108, 200], [170, 580], [232, 538], [246, 540], [122, 203], [270, 607], [297, 672], [196, 648]],
  [[205, 219], [293, 238], [345, 623], [403, 578], [427, 580], [315, 243], [450, 650], [472, 714], [367, 689]],
  [[397, 259], [482, 277], [527, 666], [583, 622], [612, 623], [512, 284], [633, 692], [655, 758], [548, 734]],
  [[594, 300], [674, 317], [712, 709], [769, 664], [807, 668], [714, 325], [823, 738], [845, 804], [733, 777]],
  [[798, 342], [875, 358], [905, 754], [957, 709], [1000, 713], [921, 368], [1018, 785], [1038, 852], [922, 826]],
  [[1010, 386], [1080, 401], [1103, 801], [1152, 752], [1207, 762], [1136, 412], [1217, 832], [1236, 900], [1118, 872]],
];
const lower = [
  [[30, 611], [118, 630], [187, 1002], [243, 958], [250, 960], [125, 632], [278, 1027]],
  [[196, 648], [283, 668], [347, 1046], [403, 998], [412, 1000], [297, 672], [440, 1072]],
  [[367, 689], [455, 710], [510, 1090], [564, 1044], [584, 1046], [472, 714], [608, 1115]],
  [[548, 734], [630, 754], [677, 1136], [729, 1086], [755, 1090], [655, 758], [778, 1162]],
  [[733, 777], [808, 796], [850, 1183], [899, 1131], [934, 1138], [845, 804], [952, 1209]],
  [[922, 826], [994, 842], [1026, 1230], [1073, 1178], [1114, 1186], [1038, 852], [1132, 1257]],
  [[1118, 872], [1184, 889], [1206, 1280], [1254, 1226], [1302, 1235], [1236, 900], [1315, 1308]],
];
const bottomStarts = [[125, 988], ...lower.map((l) => l[6])];

const Fence = () => (
  <g transform="translate(85 210) scale(0.33333)" strokeLinejoin="round">
    <polygon points="15,108 1212,350 1404,1386 15,1008" fill="#fafafa" />
    <polygon points="15,52 1267,299 1212,350 15,108" fill="#eaeaea" />
    <polygon points="1212,350 1267,299 1449,1328 1404,1386" fill="#9c9c9c" />
    <polygon points="1212,350 1267,299 1279,383 1225,430" fill="#a4a4a4" />
    <polygon points="15,350 66,498 15,530" fill="#9c9c9c" />
    <polygon points="15,530 66,498 98,568 15,547" fill="#e9e9e9" />
    <polygon points="15,738 88,918 32,962 15,925" fill="#9c9c9c" />
    <polygon points="32,962 88,918 125,988" fill="#e9e9e9" />
    {[...upper, ...lower].map((u, i) => (
      <g key={i}>
        <polygon points={P([u[1], u[3], u[4], u[5]])} fill="#cececd" />
        <polygon points={P([u[2], u[3], u[4], u[6]])} fill="#e9e9e9" />
        <polygon points={P([u[0], u[1], u[3], u[2]])} fill="#9c9c9c" />
        <polyline points={P([u[0], u[2]])} stroke="#222" strokeWidth="3" strokeDasharray="5 3" fill="none" />
        <polyline points={P([u[1], u[3], u[4]])} stroke="#000" strokeWidth="7" fill="none" />
        <polyline points={P([u[5], u[6]])} stroke="#000" strokeWidth="7" fill="none" />
      </g>
    ))}
    <g stroke="#000" fill="none">
      {upper.map((u, i) => (
        <g key={i}>
          <polyline points={P([u[6], u[7]])} strokeWidth="7" />
          <polyline points={P([u[2], u[8]])} strokeWidth="3" />
        </g>
      ))}
      {lower.map((l, i) => <polyline key={i} points={P([bottomStarts[i], l[2], l[3]])} strokeWidth="6" />)}
      <path d="M15 108 L1212 350 L1225 430 M1212 350 L1267 299 M15 547 L1305 850 L1356 798 M1225 430 L1320 917 M1320 917 L1404 1386 M15 960 L1392 1330" strokeWidth="3" />
      <path d="M15 52 L1267 299 L1449 1328 L1404 1386 L15 1008 M15 180 L1225 430 L1279 383 M15 605 L1315 917 L1366 868 M1315 1308 L1394 1330 L1438 1277" strokeWidth="7" />
      <path d="M15 352 L98 570 L122 632 M15 735 L125 988 M122 632 L245 955" strokeWidth="8" />
      <path d="M15 372 L66 498" strokeWidth="5" />
      <path d="M32 962 L88 918" strokeWidth="5" />
    </g>
  </g>
);

const rings = Array.from({ length: 52 }, (_, i) => i / 51);
const Poles = () => (
  <g transform="translate(600 250) scale(0.33333)">
    <defs>
      <linearGradient id="pole" gradientUnits="userSpaceOnUse" x1="221" y1="95" x2="307" y2="88">
        <stop offset="0" stopColor="#c9c9c9" /><stop offset="0.3" stopColor="#fff" />
        <stop offset="0.62" stopColor="#fff" /><stop offset="1" stopColor="#8c8c8c" />
      </linearGradient>
      <pattern id="dots" width="12" height="12" patternUnits="userSpaceOnUse">
        <rect width="12" height="12" fill="#f0f0ff" /><rect x="3" y="3" width="3" height="3" fill="#3a3ac8" />
      </pattern>
    </defs>
    <path d="M74 65 L217 1325 Q252 1350 287 1325 L160 65Z" fill="url(#dots)" />
    <g fill="none" stroke="#0a00dc">
      {rings.map((t) => {
        const cx = 117 + 135 * t;
        const cy = 67 + 1256 * t;
        const rx = 43 - 8 * t;
        return <path key={t} d={`M${cx - rx} ${cy} A${rx} ${19 - 3 * t} 0 0 0 ${cx + rx} ${cy}`} strokeWidth="10" />;
      })}
      <path d="M76 65 L219 1325 M160 65 L285 1325" strokeWidth="9" />
      <path d="M117 80 L160 600" strokeWidth="3" strokeDasharray="6 12" />
    </g>
    <ellipse cx="117" cy="65" rx="42" ry="19" fill="url(#dots)" stroke="#0a00dc" strokeWidth="7" />
    <path d="M221 92 L333 1355 Q367 1388 401 1355 L307 92Z" fill="url(#pole)" />
    <path d="M333 1355 Q345 1376 374 1372" fill="none" stroke="#000" strokeWidth="6" />
    <path d="M222 92 L334 1355 M307 92 L402 1345" stroke="#000" strokeWidth="6" />
    <ellipse cx="264" cy="92" rx="43" ry="20" fill="#e9e9e9" stroke="#000" strokeWidth="3" />
    <path d="M221 92 A43 20 0 0 1 307 92" fill="none" stroke="#000" strokeWidth="7" />
    <path d="M290 1332 L372 1356" stroke="#c22" strokeWidth="3" strokeDasharray="3 6" />
    <path d="M396 1336 L420 1362 L396 1390 L372 1362Z" fill="#b9b9b9" opacity="0.7" />
    <path d="M386 1344 H404 M395 1334 V1352 M404 1362 H422 M413 1352 V1372 M386 1381 H404 M395 1372 V1390 M368 1362 H386 M377 1352 V1372 M413 1390 H431 M422 1380 V1400" stroke="#000" strokeWidth="5" />
  </g>
);

const Scene = () => (
  <Canvas aria-hidden="true">
    <g transform="translate(-90 -114)">
      <path d="M276 263 L488 114" stroke="#2f9b35" strokeWidth="1" />
      <path d="M90 557 L1640 985" stroke="#a01414" strokeWidth="1" />
      <path d="M90 826 L188 1009" stroke="#1a1a90" strokeWidth="1" strokeDasharray="2 4" />
      <Fence />
      <Poles />
    </g>
  </Canvas>
);

/* ---------- material textures ---------- */
const Granite = () => {
  let s = 7;
  const r = () => (s = (s * 16807) % 2147483647) / 2147483647;
  return (
    <Texture viewBox="0 0 58 58" aria-hidden="true">
      <rect width="58" height="58" fill="#e6e6e6" />
      {Array.from({ length: 760 }, (_, i) => (
        <rect key={i} x={Math.floor(r() * 57)} y={Math.floor(r() * 57)} width={r() > 0.6 ? 2 : 1} height={r() > 0.7 ? 2 : 1} fill={r() > 0.5 ? '#868686' : '#b2b2b2'} />
      ))}
    </Texture>
  );
};
const Lattice = () => (
  <Texture viewBox="0 0 58 58" aria-hidden="true">
    <rect width="58" height="58" fill="#cdeefb" />
    <path d="M-6 8 L46 60 M-6 -11 L64 59 M-6 27 L30 63 M-6 46 L10 62 M8 -6 L64 50 M27 -6 L64 31 M46 -6 L64 12 M-6 12 L12 -6 M-6 31 L31 -6 M-6 50 L50 -6 M-5 68 L64 -1 M14 68 L64 18 M33 68 L64 37 M50 68 L64 54" stroke="#8fa6b2" strokeWidth="1" />
    <path d="M58 0 L58 58 L0 58Z" fill="#fff" opacity="0.5" />
  </Texture>
);
const GlassBlock = () => (
  <Texture viewBox="0 0 58 58" aria-hidden="true">
    <rect width="58" height="58" fill="#b9bcb6" />
    {[1, 20, 40].map((y) => [1, 20, 40].map((x) => (
      <g key={`${x}-${y}`}>
        <rect x={x} y={y} width="17" height="17" fill="#8e908c" stroke="#7d807c" />
        <rect x={x + 2} y={y + 2} width="13" height="13" fill="#857f7e" />
        <path d={`M${x + 3} ${y + 11} l4 -3 l3 1 l4 -5 M${x + 3} ${y + 5} l5 1 l5 -1 M${x + 4} ${y + 14} l4 -2 l6 1`} stroke="#4f494a" fill="none" />
      </g>
    )))}
  </Texture>
);
const Clouds = () => (
  <Texture viewBox="0 0 58 58" aria-hidden="true">
    <defs>
      <filter id="sky" x="0" y="0" width="100%" height="100%">
        <feTurbulence type="fractalNoise" baseFrequency="0.04" numOctaves="3" seed="9" />
        <feColorMatrix values="0 0 0 0 0.86  0 0 0 0 0.88  0 0 0 0 0.96  3 0 0 0 -1.1" />
      </filter>
    </defs>
    <rect width="58" height="58" fill="#3c549c" />
    <rect width="58" height="58" filter="url(#sky)" />
    <path d="M58 0 L58 58 L0 58Z" fill="#e4e6f4" opacity="0.5" />
  </Texture>
);

const materials: { name: string; fill: string; plain?: boolean; art?: React.ReactNode }[] = [
  { name: '회색 유리', plain: true, fill: 'linear-gradient(to top right, rgba(140, 140, 140, 0) 50%, rgba(140, 140, 140, 0.25) 50%) content-box, linear-gradient(150deg, #fcfcfc, #8f8f8f) content-box, #fff' },
  { name: '거울', plain: true, fill: 'linear-gradient(115deg, #bdbdbd, #fff 70%) content-box, #fff' },
  { name: '골판 유리', fill: 'repeating-linear-gradient(90deg, #6b7f74 0, #96b8a8 3px, #71857b 5px, #7f988c 8px) content-box, #fff' },
  { name: '화강암', plain: true, fill: '#fff', art: <Granite /> },
  { name: '하늘', plain: true, fill: '#fff', art: <Clouds /> },
  { name: '격자 유리', plain: true, fill: '#fff', art: <Lattice /> },
  { name: '녹색 유리', fill: 'linear-gradient(#3f6209, #3f6209) content-box, #fff' },
  { name: '유리 블록', plain: true, fill: '#fff', art: <GlassBlock /> },
  { name: '하늘색 유리', fill: 'linear-gradient(135deg, #12bdea, #15cff8) content-box, #fff' },
  { name: '파란색 유리', fill: 'linear-gradient(#6695ee, #6695ee) content-box, #fff' },
  { name: '노란색 유리', fill: 'linear-gradient(135deg, #fbfb1a, #fdff10) content-box, #fff' },
  { name: '짙은 회색 유리', fill: 'linear-gradient(#818181, #818181) content-box, #fff' },
];

const Arrow = ({ right, off }: { right?: boolean; off?: boolean }) => (
  <svg width="17" height="17" viewBox="0 0 17 17" aria-hidden="true">
    <path d="M2 8.500 L8 2 V6 H15 V11 H8 V15Z" transform={right ? 'rotate(180 8.500 8.500)' : undefined} fill="#fff" stroke={off ? '#999' : '#000'} strokeWidth="1.500" />
  </svg>
);
const Home = () => (
  <svg width="20" height="20" viewBox="0 0 20 20" aria-hidden="true">
    <path d="M3.500 10 V19 H16.500 V10 M1 11 L10 2 L19 11 M4.500 7 V1.500 H6.500 V5" fill="#fff" stroke="#000" strokeWidth="1.500" />
    <rect x="7.500" y="11" width="5" height="8" fill="#000" />
  </svg>
);
const Details = () => (
  <svg width="17" height="18" viewBox="0 0 17 18" aria-hidden="true">
    <path d="M7 1 L17 9 L7 17Z" fill="#000" />
    <rect x="1" y="3.500" width="8" height="11" fill="#fff" stroke="#234" />
    <rect x="1" y="3.500" width="8" height="4" fill="#4b8bd8" /><path d="M2.500 10 H8 M2.500 12.500 H8" stroke="#58a" />
  </svg>
);
const Expand = ({ up }: { up?: boolean }) => (
  <svg width="12" height="18" viewBox="0 0 12 18" aria-hidden="true">
    <g transform={up ? 'translate(0 18) scale(1 -1)' : undefined}>
      <rect x="0.500" y="0.500" width="11" height="17" fill="#fff" stroke="#333" />
      <rect y="8" width="12" height="10" fill="#000" /><path d={'M2 2 H10 L6 6.500Z'} fill="#000" />
      <path d={up ? 'M3 13 H9' : 'M3 13 H9 M6 10 V16'} stroke="#fff" strokeWidth="2" />
    </g>
  </svg>
);
const NewMat = () => (
  <svg width="21" height="22" viewBox="0 0 21 22" aria-hidden="true">
    <path d="M2 5 L10 1 L20 3 L19 16 L11 21 L2 16Z" fill="#222" stroke="#000" />
    <path d="M4 5 L10 2 L12 3 L6 6Z M10 6 L17 3 L19 4 L12 7Z" fill="#e6dfae" /><path d="M12 12 L19 8 M12 16 L19 12" stroke="#b9ad78" />
    <circle cx="6" cy="16" r="5.500" fill="#fff" stroke="#000" strokeWidth="1.500" /><path d="M3 16 H9 M6 13 V19" stroke="#000" strokeWidth="1.500" />
  </svg>
);
const Dropper = () => (
  <svg width="20" height="20" viewBox="0 0 20 20" aria-hidden="true">
    <path d="M1 19 L2 16 L10 8 L12 10 L4 18Z" fill="#ddb45a" stroke="#333" /><path d="M6 12 L10 8 L12 10 L8 14Z" fill="#d8e2ea" stroke="#333" />
    <path d="M9 6 L14 11" stroke="#222" strokeWidth="2" /><path d="M11 8 Q12 2 16 1 Q20 2 19 5 Q17 9 12 9Z" fill="#555" stroke="#222" />
  </svg>
);

const NavBar = ({ id, label, value, backOff, lined }: { id: string; label: string; value: string; backOff?: boolean; lined?: boolean }) => (
  <NavRow>
    <Arrows>
      <IconButton aria-label="뒤로"><Arrow off={backOff} /></IconButton>
      <IconButton aria-label="앞으로"><Arrow right off /></IconButton>
      <IconButton aria-label="홈"><Home /></IconButton>
    </Arrows>
    <Combo>
      <Select id={id} aria-label={label} $lined={lined}><option>{value}</option></Select>
      <ComboArrow><svg width="9" height="5" aria-hidden="true"><path d="M0 0H9L4.500 5Z" /></svg></ComboArrow>
    </Combo>
    <IconButton aria-label="세부 정보" $lift><Details /></IconButton>
  </NavRow>
);

const Tool = ({ name, label, on, side }: { name: string; label: string; on?: boolean; side?: boolean }) => (
  <ToolButton aria-label={label} $on={on} $side={side}><Icon name={name} /></ToolButton>
);
const Split = ({ name, label }: { name: string; label: string }) => (
  <SplitTool><Tool name={name} label={label} /><DropButton aria-label={`${label} 옵션`}><Tri /></DropButton></SplitTool>
);

const menus = ['파일(F)', '편집(E)', '보기(V)', '카메라(C)', '그리기(R)', '도구(T)', '창(W)', '도움말(H)'];
const side: [string, string][][] = [
  [['select', '선택'], ['component', '구성요소 만들기'], ['paint', '페인트 통'], ['eraser', '지우개']],
  [['pencil', '선'], ['freehand', '프리핸드'], ['rect', '사각형'], ['rotrect', '회전된 사각형'], ['circle', '원'], ['polygon', '다각형'], ['arc', '호'], ['arc2', '2점 호'], ['arc3', '3점 호'], ['pie', '파이']],
  [['move', '이동'], ['pushpull', '밀기/끌기'], ['rotate', '회전'], ['follow', '따라가기'], ['scale', '배율'], ['offset', '오프셋']],
  [['tape', '줄자'], ['dim', '치수'], ['protractor', '각도기'], ['text', '텍스트'], ['axes', '축'], ['text3d', '3D 텍스트']],
  [['orbit', '궤도'], ['hand', '이동 보기'], ['zoom', '확대/축소'], ['zoomwin', '창 확대'], ['extents', '범위 확대'], ['previous', '이전']],
  [['position', '카메라 배치'], ['look', '둘러보기'], ['walk', '걷기'], ['section', '단면 평면']],
];

export default function App() {
  return (
    <Page>
      <Global />
      <MenuBar>{menus.map((m) => <MenuItem key={m}>{m}</MenuItem>)}</MenuBar>
      <TopBar>
        <Group>
          <Grip />
          <Tool name="select" label="선택" />
          <Sep />
          <Tool name="eraser" label="지우개" />
          <Split name="pencil" label="선" />
          <Split name="arc2" label="호" />
          <Split name="circle" label="원" />
          <Sep />
          <Tool name="pushpull" label="밀기/끌기" />
          <Tool name="offset" label="오프셋" />
          <Tool name="move" label="이동" on />
          <Tool name="rotate" label="회전" />
          <Tool name="scale" label="배율" />
          <Sep />
          <Tool name="tape" label="줄자" />
          <Tool name="text" label="텍스트" />
          <Tool name="paint" label="페인트 통" />
          <Sep />
          <Tool name="orbit" label="궤도" />
          <Tool name="hand" label="이동 보기" />
          <Tool name="zoom" label="확대/축소" />
          <Tool name="extents" label="범위 확대" />
          <Sep />
          <Tool name="warehouseGet" label="모델 가져오기" />
          <Tool name="warehouseRuby" label="확장 프로그램 창고" />
          <Tool name="warehouseSend" label="레이아웃으로 보내기" />
          <Sep />
          <Tool name="ruby" label="확장 프로그램 관리자" />
        </Group>
        <Group>
          <Grip />
          <Tool name="houseIso" label="등각" />
          <Tool name="boxIso" label="평면" />
          <Tool name="houseFront" label="정면" />
          <Tool name="houseRight" label="오른쪽" />
          <Tool name="houseBack" label="뒤쪽" />
          <Tool name="houseLeft" label="왼쪽" />
        </Group>
        <Group>
          <Grip />
          <Tool name="shell" label="외부 쉘" />
          <Sep />
          <Tool name="intersect" label="교차" />
          <Tool name="union" label="결합" />
          <Tool name="subtract" label="빼기" />
          <Tool name="trim" label="자르기" />
          <Tool name="split" label="분할" />
        </Group>
        <Group $grow>
          <Grip />
          <Tool name="shadow" label="그림자" />
          <Sliders>
            <SliderBox>
              <Range type="range" min={0} max={100} defaultValue={86} aria-label="날짜" $track="linear-gradient(90deg, #fff, #f3ba2c 34%, #e81212 68%, #f27a7a 85%, #ffd9d9 88%, #fff)" />
              <Ticks>{'JFMAMJJASOND'.split('').map((m, i) => <span key={i}>{m}</span>)}</Ticks>
            </SliderBox>
            <SliderBox>
              <Range type="range" min={0} max={100} defaultValue={63} aria-label="시간" $track="linear-gradient(90deg, #fff, #9dbdd8 35%, #6a79ee 60%, #5a68ee 70%, #1b1f7c 88%, #000)" />
              <Ticks><span>07:08</span><span>정오</span><span>17:22</span></Ticks>
            </SliderBox>
          </Sliders>
        </Group>
      </TopBar>
      <Workspace>
        <SideBar>
          <SideGrip />
          <SideTools>
            {side.map((g, i) => (
              <React.Fragment key={i}>
                {i > 0 && <SideLine />}
                {g.map(([n, l]) => <Tool key={n} name={n} label={l} on={n === 'move'} side />)}
              </React.Fragment>
            ))}
          </SideTools>
          <SideEnd />
        </SideBar>
        <Viewport>
          <Scene />
          <Tip>빨강 축에</Tip>
          <Keys>
            <Key>&lt;LButtonDown&gt;</Key>
            <Key>&lt;LButtonUp&gt;</Key>
            <Key>&lt;Ctrl&gt;</Key>
          </Keys>
        </Viewport>
        <Tray>
          <TrayTitle>
            <TrayName>기본 트레이</TrayName>
            <PinButton aria-label="고정"><svg width="9" height="10" aria-hidden="true"><path d="M2.500 1H6.500V6H2.500Z M0 6.500H9 M4.500 6V10 M6 1V6" fill="none" stroke="#000" /></svg></PinButton>
            <CloseButton aria-label="닫기">x</CloseButton>
          </TrayTitle>
          <TrayBody>
            <TrayMain>
              <SectionHead><svg width="9" height="8" aria-hidden="true"><path d="M0 0H9L4.500 8Z" /></svg><HeadText>요소 정보</HeadText><BoxClose aria-label="닫기">×</BoxClose></SectionHead>
              <InfoPanel>
                <InfoTop><Count>98개 요소</Count><IconButton aria-label="펼치기"><Expand /></IconButton></InfoTop>
                <InfoRow>
                  <Swatch $w={53} $h={60}><Diagonal /></Swatch>
                  <LayerLabel htmlFor="layer">레이어(<Under>L</Under>):</LayerLabel>
                  <Combo $w={118}>
                    <Select id="layer"><option>Layer0</option></Select>
                    <ComboArrow><svg width="9" height="5" aria-hidden="true"><path d="M0 0H9L4.500 5Z" /></svg></ComboArrow>
                  </Combo>
                </InfoRow>
              </InfoPanel>
              <SectionHead><svg width="9" height="8" aria-hidden="true"><path d="M0 0H9L4.500 8Z" /></svg><HeadText>재질</HeadText><BoxClose aria-label="닫기">×</BoxClose></SectionHead>
              <MatPanel>
                <Swatch $w={77} $h={87}><Diagonal /></Swatch>
                <MatName aria-label="재질 이름" defaultValue="기본값" disabled />
                <MatSide>
                  <IconButton aria-label="접기"><Expand up /></IconButton>
                  <IconButton aria-label="재질 만들기"><NewMat /></IconButton>
                  <MiniDiag />
                </MatSide>
              </MatPanel>
              <Tabs>
                <Tab $on>선택</Tab>
                <Tab>편집</Tab>
                <Push><IconButton aria-label="샘플 페인트"><Dropper /></IconButton></Push>
              </Tabs>
              <NavBar id="library" label="재질 모음" value="유리 및 거울" />
              <List>
                {materials.map((m) => <Material key={m.name} aria-label={m.name} $fill={m.fill} $plain={m.plain}>{m.art}</Material>)}
              </List>
              <Splitter />
              <SubTitle>선택</SubTitle>
              <NavBar id="library2" label="폴더" value="재질" backOff lined />
              <FolderArea>
                <Folders>
                  {['a', 'b', 'c'].map((k) => (
                    <Folder key={k} aria-label="폴더">
                      <svg width="36" height="34" viewBox="0 0 36 34" aria-hidden="true">
                        <path d="M1 5 L9 2 L12 5 L24 3 L24 34 L4 34Z" fill="#7fb3d3" stroke="#456" />
                        <path d="M6 8 L35 0 L32 34 L4 34Z" fill="#b3946b" stroke="#555" />
                      </svg>
                    </Folder>
                  ))}
                </Folders>
                <ScrollBar $w={20}><ScrollButton aria-label="위로"><Chevron /></ScrollButton><Thumb /></ScrollBar>
              </FolderArea>
            </TrayMain>
            <ScrollBar $w={21}>
              <ScrollButton aria-label="위로"><Chevron /></ScrollButton>
              <Thumb />
              <ScrollButton aria-label="아래로"><Chevron down /></ScrollButton>
            </ScrollBar>
          </TrayBody>
        </Tray>
        <Caption>이동 복사(Move Copy) - Ctrl -&gt; 이동(Move)</Caption>
      </Workspace>
      <Status>
        <StatusIcons>
          <svg width="18" height="18" aria-hidden="true"><circle cx="9" cy="9" r="8" fill="#fff" stroke="#999" strokeWidth="1.500" /><path d="M9 15 Q5 8 6 6 Q9 2 12 6 Q13 8 9 15Z" fill="#999" /></svg>
          <svg width="18" height="18" aria-hidden="true"><circle cx="9" cy="9" r="8" fill="#fff" stroke="#000" strokeWidth="1.500" /><circle cx="9" cy="5" r="1.500" /><path d="M7 8 H10 V14 H8 V9 H7Z" stroke="#000" /></svg>
          <svg width="18" height="18" aria-hidden="true"><circle cx="9" cy="9" r="8" fill="#ddd" stroke="#999" strokeWidth="1.500" /><circle cx="9" cy="6" r="3" fill="#888" /><path d="M3 14 Q4 10 9 10 Q14 10 15 14 Q9 19 3 14Z" fill="#888" /></svg>
        </StatusIcons>
        <StatusLine />
        <StatusText>복사된 요소를 배치하거나 값을 입력하십시오.</StatusText>
        <StatusLine />
        <DistLabel htmlFor="distance">거리</DistLabel>
        <Dist id="distance" defaultValue="232mm" />
      </Status>
    </Page>
  );
}
